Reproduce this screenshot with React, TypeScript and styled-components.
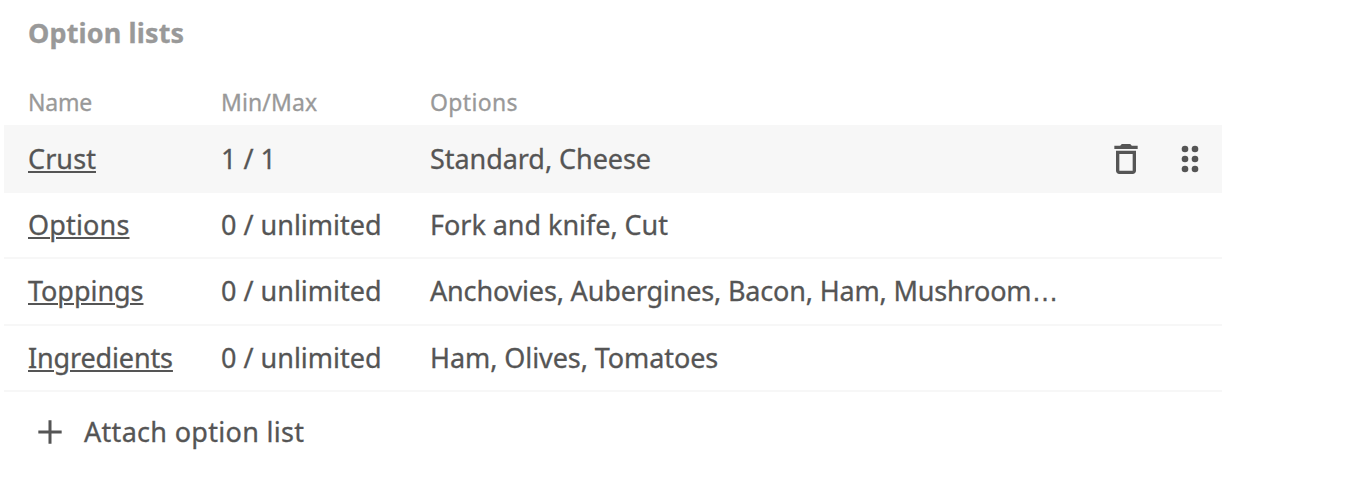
import React from 'react';
import styled, { createGlobalStyle } from 'styled-components';

const GlobalStyle = createGlobalStyle`
  * { box-sizing: border-box; }
  body {
    margin: 0;
    background: #fff;
    color: #555;
    font-family: 'Noto Sans', 'Open Sans', sans-serif;
    -webkit-text-stroke: 0.3px currentColor;
  }
`;

const Panel = styled.section`
  width: 1222px;
  padding: 13px 0 0 4px;
`;

const Title = styled.h2`
  margin: 0;
  padding-left: 24px;
  font-size: 27px;
  line-height: 40px;
  font-weight: 700;
  letter-spacing: 0.13px;
  color: #999;
`;

const columns = '193px 209px 1fr auto';

const HeaderRow = styled.div`
  display: grid;
  grid-template-columns: ${columns};
  align-items: center;
  height: 44px;
  margin-top: 28px;
  padding: 0 0 2px 24px;
  font-size: 23px;
  color: #999;
`;

const HeaderCell = styled.span<{ $tracking: number }>`
  letter-spacing: ${p => p.$tracking}px;
`;

const Row = styled.div<{ $height: number; $active?: boolean }>`
  display: grid;
  grid-template-columns: ${columns};
  grid-template-rows: ${p => (p.$active ? '68px' : '64px')};
  align-items: center;
  height: ${p => p.$height}px;
  padding: 0 12px 0 24px;
  font-size: 27px;
  line-height: 36px;
  background: ${p => (p.$active ? '#f7f7f7' : 'transparent')};
  border-bottom: ${p => (p.$active ? 'none' : '2px solid #f7f7f7')};
`;

const NameLink = styled.a<{ $tracking: number }>`
  justify-self: start;
  color: inherit;
  letter-spacing: ${p => p.$tracking}px;
  text-decoration: underline;
  text-decoration-thickness: 2px;
  text-underline-offset: 2px;
`;

const Cell = styled.span<{ $tracking?: number }>`
  white-space: nowrap;
  letter-spacing: ${p => p.$tracking ?? 0}px;
`;

const Ellipsis = styled.span`
  font-family: 'Liberation Sans', sans-serif;
  line-height: 1;
`;

const Actions = styled.div`
  display: flex;
  gap: 24px;
`;

const IconButton = styled.button`
  display: flex;
  padding: 0;
  border: 0;
  background: none;
  color: inherit;
`;

const AttachButton = styled.button`
  display: flex;
  align-items: center;
  gap: 14px;
  height: 80px;
  padding: 0 0 0 26px;
  border: 0;
  background: none;
  color: inherit;
  font: inherit;
  font-size: 27px;
  letter-spacing: 0.3px;
`;

const AttachLabel = styled.span`
  padding-bottom: 2px;
`;

const Glyph = styled.svg`
  display: block;
  width: 40px;
  height: 40px;
  fill: currentColor;
`;

const TrashIcon = () => (
  <Glyph viewBox="0 0 24 24">
    <path d="M6 19c0 1.1.9 2 2 2h8c1.1 0 2-.9 2-2V7H6v12zM8 9h8v10H8V9zm7.5-5l-1-1h-5l-1 1H5v2h14V4h-3.5z" />
  </Glyph>
);

const DragIcon = () => (
  <Glyph viewBox="0 0 24 24">
    {[9, 15].map(x => [6, 12, 18].map(y => <circle key={`${x}-${y}`} cx={x} cy={y} r="2" />))}
  </Glyph>
);

const PlusIcon = () => (
  <Glyph viewBox="0 0 24 24">
    <path d="M19 12.9h-6.1V19h-1.8v-6.1H5v-1.8h6.1V5h1.8v6.1H19z" />
  </Glyph>
);

interface OptionList {
  name: string;
  nameTracking: number;
  range: string;
  options: string;
  tracking: number;
  height: number;
  truncated?: boolean;
  active?: boolean;
}

const lists: OptionList[] = [
  { name: 'Crust', nameTracking: 0.08, range: '1 / 1', options: 'Standard, Cheese', tracking: -0.06, height: 68, active: true },
  { name: 'Options', nameTracking: 0.16, range: '0 / unlimited', options: 'Fork and knife, Cut', tracking: -0.04, height: 66 },
  { name: 'Toppings', nameTracking: -0.05, range: '0 / unlimited', options: 'Anchovies, Aubergines, Bacon, Ham, Mushroom', tracking: -0.17, height: 67, truncated: true },
  { name: 'Ingredients', nameTracking: -0.14, range: '0 / unlimited', options: 'Ham, Olives, Tomatoes', tracking: -0.08, height: 66 },
];

export default function App() {
  return (
    <>
      <GlobalStyle />
      <Panel>
        <Title>Option lists</Title>
        <HeaderRow>
          <HeaderCell $tracking={-0.2}>Name</HeaderCell>
          <HeaderCell $tracking={0.12}>Min/Max</HeaderCell>
          <HeaderCell $tracking={0.33}>Options</HeaderCell>
        </HeaderRow>
        {lists.map(list => (
          <Row key={list.name} $height={list.height} $active={list.active}>
            <NameLink $tracking={list.nameTracking}>{list.name}</NameLink>
            <Cell>{list.range}</Cell>
            <Cell $tracking={list.tracking}>
              {list.options}
              {list.truncated && <Ellipsis>…</Ellipsis>}
            </Cell>
            {list.active && (
              <Actions>
                <IconButton aria-label="Delete"><TrashIcon /></IconButton>
                <IconButton aria-label="Reorder"><DragIcon /></IconButton>
              </Actions>
            )}
          </Row>
        ))}
        <AttachButton>
          <PlusIcon />
          <AttachLabel>Attach option list</AttachLabel>
        </AttachButton>
      </Panel>
    </>
  );
}
